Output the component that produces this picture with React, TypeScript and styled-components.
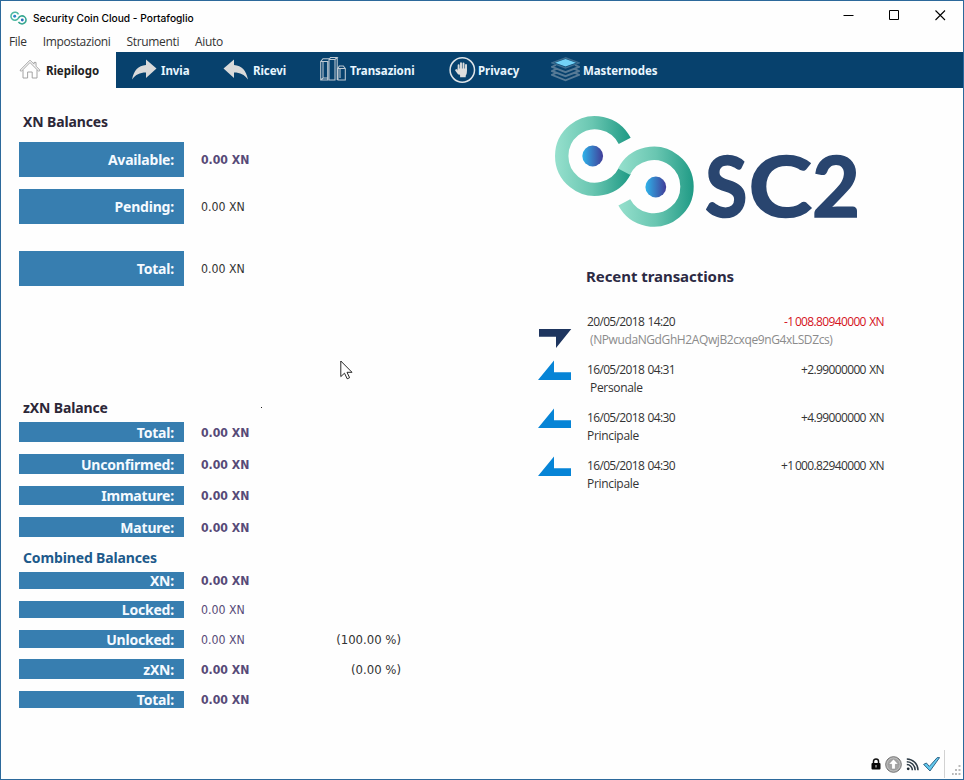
import React from 'react';
import styled, { createGlobalStyle } from 'styled-components';

const GlobalStyle = createGlobalStyle`
  * { box-sizing: border-box; }
  body { margin: 0; background: #fff; }
  svg { display: block; flex: none; }
`;

const tahoma = '"DejaVu Sans Condensed", "DejaVu Sans", sans-serif';
const tahomaBold = '"Noto Sans", "DejaVu Sans Condensed", sans-serif';
const segoe = '"Open Sans", "Noto Sans", sans-serif';

const Window = styled.div`
  position: relative;
  width: 964px;
  height: 780px;
  display: flex;
  flex-direction: column;
  background: #fefefe;
  border: 1px solid #2c699b;
  overflow: hidden;
`;
const TitleBar = styled.header`
  display: flex;
  justify-content: space-between;
  height: 31px;
`;
const TitleLabel = styled.div`
  display: flex;
  align-items: center;
  gap: 6px;
  width: 200px;
  height: 32px;
  margin: -1px 0 0 -1px;
  padding: 4px 0 0 10px;
  background: #fefefe;
  color: #000;
  font: 500 10.2px/16px Inter, sans-serif;
  white-space: nowrap;
`;
const WindowButtons = styled.div`
  display: flex;
  gap: 35px;
  padding: 9px 17px 0 0;
`;
const MenuBar = styled.nav`
  display: flex;
  gap: 16px;
  height: 20px;
  padding-left: 8px;
  color: #333;
  font: 400 12px/20px ${segoe};
  letter-spacing: -0.34px;
`;
const TabBar = styled.nav`
  display: flex;
  height: 36px;
  background: #07416d;
`;
const Tab = styled.div<{ $width: number; $icon: number; $active?: boolean }>`
  display: grid;
  grid-template-columns: ${p => p.$icon}px auto;
  align-items: center;
  width: ${p => p.$width}px;
  padding-left: ${p => (p.$active ? 18 : 16)}px;
  background: ${p => (p.$active ? '#fefefe' : 'transparent')};
  color: ${p => (p.$active ? '#222' : '#e9f6ff')};
  font: bold 11.5px/16px ${tahomaBold};
  letter-spacing: -0.06px;
  white-space: nowrap;
`;
const TabText = styled.span`
  padding-top: 1px;
`;
const Content = styled.main`
  display: grid;
  grid-template-columns: 518px 1fr;
  flex: 1;
`;
const Balances = styled.section`
  padding: 24px 0 0 18px;
`;
const Heading = styled.h2<{ $top?: number; $accent?: boolean }>`
  margin: ${p => p.$top ?? 0}px 0 0 4px;
  height: 20px;
  color: ${p => (p.$accent ? '#1d5a8b' : '#2c2738')};
  font: bold 14px/20px ${tahomaBold};
  letter-spacing: -0.14px;
`;
const BalanceRow = styled.div<{ $top: number; $height: number }>`
  display: grid;
  grid-template-columns: 165px 117px 100px;
  align-items: center;
  height: ${p => p.$height}px;
  margin-top: ${p => p.$top}px;
`;
const BalanceLabel = styled.div`
  display: flex;
  align-items: center;
  justify-content: flex-end;
  height: 100%;
  padding: 1px 10px 0 0;
  background: #377eb0;
  color: #f5faff;
  font: bold 14px/16px ${tahomaBold};
  letter-spacing: -0.2px;
`;
const Amount = styled.div<{ $bold?: boolean; $tint?: boolean }>`
  padding: 1px 0 0 17px;
  color: ${p => (p.$tint ? '#574a78' : '#333')};
  font: ${p => (p.$bold ? 'bold 12.15px' : '400 12.25px')}/16px ${tahoma};
  white-space: nowrap;
`;
const Percent = styled.div`
  color: #333;
  text-align: right;
  font: 400 13px/16px ${tahoma};
  padding-top: 2px;
`;
const Overview = styled.section`
  padding: 26px 0 0 18px;
`;
const RecentHeading = styled.h2`
  margin: 28px 0 26px 49px;
  color: #2c2a44;
  font: bold 15px/20px ${tahomaBold};
  letter-spacing: -0.06px;
`;
const Transaction = styled.article`
  display: grid;
  grid-template-columns: 49px 297px;
  height: 48px;
  margin-left: 1px;
`;
const TransactionText = styled.div`
  padding-top: 1px;
  color: #333;
  font: 400 12px/18px ${segoe};
`;
const TransactionHead = styled.div`
  display: flex;
  justify-content: space-between;
`;
const DateText = styled.span`
  letter-spacing: -0.66px;
  word-spacing: 1px;
`;
const Value = styled.span<{ $out?: boolean }>`
  color: ${p => (p.$out ? '#d5121c' : '#333')};
  letter-spacing: -0.64px;
  word-spacing: 1px;
`;
const Address = styled.div<{ $muted?: boolean; $indent?: boolean }>`
  padding-left: ${p => (p.$indent ? 3 : 0)}px;
  color: ${p => (p.$muted ? '#8b8b8b' : '#333')};
  letter-spacing: ${p => (p.$muted ? -0.4 : -0.32)}px;
`;
const StatusBar = styled.footer`
  display: flex;
  align-items: center;
  justify-content: flex-end;
  height: 30px;
  padding-right: 2px;
`;
const StatusIcons = styled.div`
  display: flex;
  align-items: center;
  gap: 4px;
  height: 28px;
  padding-right: 4px;
  border-right: 1px solid #d2d2d2;
  margin-right: 7px;
`;
const Pointer = styled.svg`
  position: absolute;
  left: 339px;
  top: 359px;
`;
const Speck = styled.i`
  position: absolute;
  left: 260px;
  top: 406px;
  width: 1px;
  height: 1px;
  background: #222;
`;

const leftRing = 'M624.7 140.9A33.3 33.3 0 1 0 624.7 171.1';
const rightRing = 'M624 171.6A33.3 33.3 0 1 1 624.3 202.3';

const MiniLogo = () => (
  <svg width="17" height="14" viewBox="554 115 141 112">
    <g fill="none" stroke="#35a68f" strokeWidth="13">
      <path d={leftRing} stroke="#4fb9a2" />
      <path d={rightRing} />
    </g>
    <circle cx="593" cy="156" r="12" fill="#2d86c9" />
    <circle cx="656" cy="187" r="12" fill="#2d6dbb" />
  </svg>
);

const Logo = () => (
  <svg width="340" height="124" viewBox="537 114 340 124" overflow="visible">
    <defs>
      <linearGradient id="ringLeft" gradientUnits="userSpaceOnUse" x1="555" x2="630" y1="0" y2="0">
        <stop offset="0" stopColor="#96e0cd" />
        <stop offset="0.5" stopColor="#69c6b1" />
        <stop offset="1" stopColor="#1f9a85" />
      </linearGradient>
      <linearGradient id="ringRight" gradientUnits="userSpaceOnUse" x1="618" x2="694" y1="0" y2="0">
        <stop offset="0" stopColor="#96e0cd" />
        <stop offset="0.5" stopColor="#69c6b1" />
        <stop offset="1" stopColor="#1f9a85" />
      </linearGradient>
      <linearGradient id="dot">
        <stop offset="0" stopColor="#2fb4ea" />
        <stop offset="1" stopColor="#413c98" />
      </linearGradient>
    </defs>
    <g fill="none" strokeWidth="13.4">
      <path d={leftRing} stroke="url(#ringLeft)" />
      <path d={rightRing} stroke="url(#ringRight)" />
    </g>
    <circle cx="592.7" cy="156" r="10.4" fill="url(#dot)" />
    <circle cx="655.8" cy="187" r="10.4" fill="url(#dot)" />
    <g fill="#29456f" stroke="#29456f" strokeWidth="1.6" fontFamily="Lato" fontWeight="bold" fontSize="84">
      <text x="705" y="216.5" textLength="42.5" lengthAdjust="spacingAndGlyphs">S</text>
      <text x="748.5" y="216.5" textLength="63.5" lengthAdjust="spacingAndGlyphs">C</text>
      <text x="812" y="216.5" textLength="48" lengthAdjust="spacingAndGlyphs">2</text>
    </g>
  </svg>
);

const HomeIcon = () => (
  <svg width="22" height="22" viewBox="0 0 22 22" fill="none" stroke="#9a9a9a" strokeWidth="0.9">
    <path d="M1 11.3 11 1.2l4 4V3.4h2v3.8l4 4.1-1.3 1-8.7-8.8-8.7 8.8Z" />
    <path d="M4 11v8h4.6v-6h4.6v6H18v-8" />
  </svg>
);
const SendIcon = () => (
  <svg width="26" height="22" viewBox="0 0 26 22">
    <path d="M24.5 9.5 14 0.5V6C6 6.5 2 11.5 0 20.5 4 15.5 7.5 13.6 14 13.5V19Z" fill="#dadada" />
  </svg>
);
const ReceiveIcon = () => (
  <svg width="26" height="22" viewBox="0 0 26 22">
    <path d="M0.5 9.5 11 0.5V6C19 6.5 23 11.5 25 20.5 21 15.5 17.5 13.6 11 13.5V19Z" fill="#dadada" />
  </svg>
);
const ChartIcon = () => (
  <svg width="27" height="26" viewBox="0 0 27 26" fill="none" stroke="#bfcad3" strokeWidth="1.05">
    <path d="M.7 4.5h7V23h-7ZM.7 4.5 3 1.7h6.5M9 2.5h6V23H9ZM9 2.5 10.5.5h6.7L15 2.5M17.2.5V23M3 4.5V21M18 11.5h7.3V23H18ZM18 11.5 19.3 9h4l2 2.5M20 11.5V21M.7 23 3 21h4.5" />
  </svg>
);
const PrivacyIcon = () => (
  <svg width="27" height="28" viewBox="0 0 27 28">
    <circle cx="13.3" cy="14" r="12.2" fill="none" stroke="#dfe4e8" strokeWidth="1.5" />
    <g stroke="#dedede" strokeWidth="1.9" strokeLinecap="round" fill="none">
      <path d="M9.6 14V9.2M12 13V7.2M14.5 13V7.4M17 14V9" />
      <path d="M7.2 14.2 9.8 17.5" strokeWidth="2.1" />
    </g>
    <path d="M8.7 12.5h9.2v3.5q0 2-1.2 3.7v1.6h-5.6v-1.7L8.7 16Z" fill="#dedede" />
  </svg>
);
const LayersIcon = () => (
  <svg width="29" height="26" viewBox="0 0 29 26" fill="none" stroke="#567a96" strokeWidth="1.9">
    <path d="M5 8 1 9.8l13.5 5.4L28 9.8 24 8M5 12.2 1 14l13.5 5.2L28 14l-4-1.8M5 16 1 17.8l13.5 5.5L28 17.8 24 16" />
    <path d="M14.5.8 1 5.8l13.5 5.1L28 5.8Z" stroke="#3f6e90" strokeWidth="1.4" />
    <path d="M14.5 2 4 5.8l10.5 3.8L25 5.8Z" fill="#72d2f7" stroke="none" />
  </svg>
);
const SentArrow = () => (
  <svg width="34" height="40" viewBox="0 0 34 40">
    <path d="M1 17h32.3L18 36V24.7H1Z" fill="#1e355f" />
  </svg>
);
const ReceivedArrow = () => (
  <svg width="34" height="40" viewBox="0 0 34 40">
    <path d="M0 20 16 .6v11.7h17V20Z" fill="#0684d6" />
  </svg>
);

const tabs = [
  { label: 'Riepilogo', width: 115, icon: 27, Icon: HomeIcon, active: true },
  { label: 'Invia', width: 91, icon: 29, Icon: SendIcon },
  { label: 'Ricevi', width: 97, icon: 30, Icon: ReceiveIcon },
  { label: 'Transazioni', width: 129, icon: 30, Icon: ChartIcon },
  { label: 'Privacy', width: 102, icon: 29, Icon: PrivacyIcon },
  { label: 'Masternodes', width: 140, icon: 32, Icon: LayersIcon },
];

type Balance = { label: string; top: number; height: number; bold?: boolean; tint?: boolean; percent?: string };

const xnRows: Balance[] = [
  { label: 'Available:', top: 10, height: 35, bold: true, tint: true },
  { label: 'Pending:', top: 12, height: 35 },
  { label: 'Total:', top: 27, height: 35 },
];
const zxnRows: Balance[] = [
  { label: 'Total:', top: 4, height: 20, bold: true, tint: true },
  { label: 'Unconfirmed:', top: 12, height: 20, bold: true, tint: true },
  { label: 'Immature:', top: 12, height: 19, bold: true, tint: true },
  { label: 'Mature:', top: 12, height: 20, bold: true, tint: true },
];
const combinedRows: Balance[] = [
  { label: 'XN:', top: 4, height: 17, bold: true, tint: true },
  { label: 'Locked:', top: 12, height: 17, tint: true },
  { label: 'Unlocked:', top: 12, height: 17, tint: true, percent: '(100.00 %)' },
  { label: 'zXN:', top: 12, height: 20, bold: true, tint: true, percent: '(0.00 %)' },
  { label: 'Total:', top: 12, height: 17, bold: true, tint: true },
];

const transactions = [
  { date: '20/05/2018 14:20', value: '-1\u2009008.80940000 XN', to: '(NPwudaNGdGhH2AQwjB2cxqe9nG4xLSDZcs)', out: true, indent: true },
  { date: '16/05/2018 04:31', value: '+2.99000000 XN', to: 'Personale', indent: true },
  { date: '16/05/2018 04:30', value: '+4.99000000 XN', to: 'Principale' },
  { date: '16/05/2018 04:30', value: '+1\u2009000.82940000 XN', to: 'Principale' },
];

const Rows = ({ items }: { items: Balance[] }) => (
  <>
    {items.map(r => (
      <BalanceRow key={r.label} $top={r.top} $height={r.height}>
        <BalanceLabel>{r.label}</BalanceLabel>
        <Amount $bold={r.bold} $tint={r.tint}>0.00 XN</Amount>
        {r.percent && <Percent>{r.percent}</Percent>}
      </BalanceRow>
    ))}
  </>
);

export default function App() {
  return (
    <Window>
      <GlobalStyle />
      <TitleBar>
        <TitleLabel>
          <MiniLogo />
          Security Coin Cloud - Portafoglio
        </TitleLabel>
        <WindowButtons>
          <svg width="11" height="11" viewBox="0 0 11 11"><path d="M0.5 5.5h10" stroke="#000" /></svg>
          <svg width="11" height="11" viewBox="0 0 11 11"><path d="M.5.5h9v9h-9Z" stroke="#000" fill="none" /></svg>
          <svg width="11" height="11" viewBox="0 0 11 11"><path d="m.5.5 9.5 9.5m0-9.5L.5 10" stroke="#000" strokeWidth="1.1" /></svg>
        </WindowButtons>
      </TitleBar>
      <MenuBar>
        <span>File</span>
        <span>Impostazioni</span>
        <span>Strumenti</span>
        <span>Aiuto</span>
      </MenuBar>
      <TabBar>
        {tabs.map(({ label, width, icon, Icon, active }) => (
          <Tab key={label} $width={width} $icon={icon} $active={active}>
            <Icon />
            <TabText>{label}</TabText>
          </Tab>
        ))}
      </TabBar>
      <Content>
        <Balances>
          <Heading>XN Balances</Heading>
          <Rows items={xnRows} />
          <Heading $top={112}>zXN Balance</Heading>
          <Rows items={zxnRows} />
          <Heading $top={11} $accent>Combined Balances</Heading>
          <Rows items={combinedRows} />
        </Balances>
        <Overview>
          <Logo />
          <RecentHeading>Recent transactions</RecentHeading>
          {transactions.map((t, i) => (
            <Transaction key={i}>
              {t.out ? <SentArrow /> : <ReceivedArrow />}
              <TransactionText>
                <TransactionHead>
                  <DateText>{t.date}</DateText>
                  <Value $out={t.out}>{t.value}</Value>
                </TransactionHead>
                <Address $muted={t.out} $indent={t.indent}>{t.to}</Address>
              </TransactionText>
            </Transaction>
          ))}
        </Overview>
      </Content>
      <StatusBar>
        <StatusIcons>
          <svg width="10" height="12" viewBox="0 0 10 12">
            <path d="M2.5 6V3.3a2.5 2.3 0 0 1 5 0V6" fill="none" stroke="#111" strokeWidth="1.5" />
            <rect x=".5" y="5" width="9" height="6.6" rx="1" fill="#080808" />
            <path d="M5 7v2.5" stroke="#ddd" />
          </svg>
          <svg width="17" height="17" viewBox="0 0 17 17">
            <circle cx="8.5" cy="8.5" r="7.8" fill="#a4a4a4" stroke="#707070" />
            <circle cx="8.5" cy="8.5" r="6.6" fill="none" stroke="#c5c5c5" strokeWidth="0.8" />
            <path d="M8.5 3 13.5 8.3H10.4V13H6.6V8.3H3.5Z" fill="#fff" stroke="#7c7c7c" strokeWidth="0.5" />
          </svg>
          <svg width="13" height="13" viewBox="0 0 13 13" fill="none" stroke="#2d3b46" strokeWidth="1.5">
            <circle cx="2.2" cy="10.8" r="1.4" fill="#1b2730" stroke="none" />
            <path d="M.8 6.6a5.5 5.5 0 0 1 5.5 5.6M.8 3.8a8.4 8.4 0 0 1 8.4 8.4M.8 1a11.2 11.2 0 0 1 11.2 11.2" />
          </svg>
          <svg width="17" height="15" viewBox="0 0 17 15">
            <path d="M.6 7.4 3.4 6 6.3 9.4 14.2.6H16.6L7 14Z" fill="#62c9ee" stroke="#23587c" strokeWidth="0.9" strokeLinejoin="round" />
          </svg>
        </StatusIcons>
        <svg width="9" height="24" viewBox="0 0 9 24" fill="#b9b9b9">
          <path d="M6.5 13h2v2h-2zM6.5 17h2v2h-2zM6.5 21h2v2h-2zM3 17h2v2H3zM3 21h2v2H3zM-.3 21h2v2h-2z" />
        </svg>
      </StatusBar>
      <Pointer width="13" height="20" viewBox="0 0 13 20">
        <path d="M.8 1v15.6l3.7-3.4 2.7 5.6 2.4-1.1-2.6-5.4H12Z" fill="#fff" stroke="#111" strokeWidth="0.9" />
      </Pointer>
      <Speck />
    </Window>
  );
}
